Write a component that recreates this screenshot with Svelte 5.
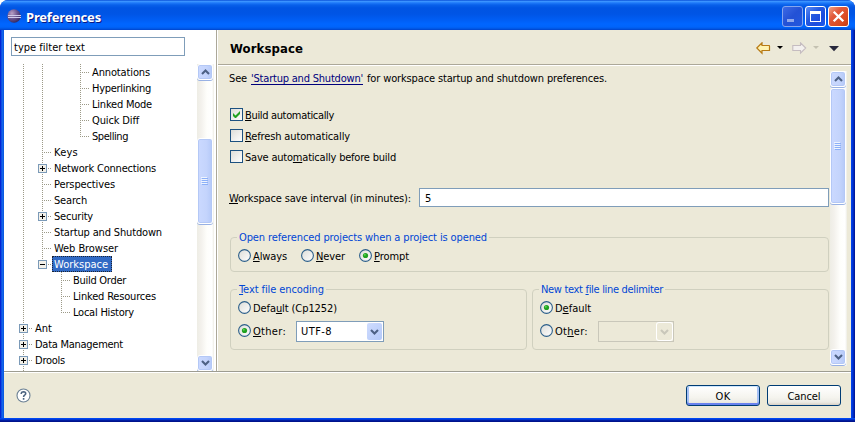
<script>
  // Guides: '|' line through, 't' branch, 'l' last branch, ' ' blank
  const rows = [
    { g: '|| t', text: 'Annotations', w: 58 },
    { g: '|| t', text: 'Hyperlinking', w: 59 },
    { g: '|| t', text: 'Linked Mode', w: 60 },
    { g: '|| t', text: 'Quick Diff', w: 47 },
    { g: '|| l', text: 'Spelling', w: 36 },
    { g: '|t', text: 'Keys', w: 24 },
    { g: '|t', text: 'Network Connections', w: 102, box: '+' },
    { g: '|t', text: 'Perspectives', w: 61 },
    { g: '|t', text: 'Search', w: 33 },
    { g: '|t', text: 'Security', w: 39, box: '+' },
    { g: '|t', text: 'Startup and Shutdown', w: 108 },
    { g: '|t', text: 'Web Browser', w: 64 },
    { g: '|l', text: 'Workspace', w: 54, box: '-', selected: true },
    { g: '| t', text: 'Build Order', w: 53 },
    { g: '| t', text: 'Linked Resources', w: 83 },
    { g: '| l', text: 'Local History', w: 61 },
    { g: 't', text: 'Ant', w: 17, box: '+' },
    { g: 't', text: 'Data Management', w: 88, box: '+' },
    { g: 't', text: 'Drools', w: 30, box: '+' },
    { g: '|', text: '', w: 0 }
  ];

  // Spreads the letters so that a label takes its nominal width
  function fit(node, width) {
    const n = node.textContent.length;
    if (!n || !width) return;
    const natural = node.getBoundingClientRect().width;
    node.style.letterSpacing = (width - natural) / n + 'px';
  }

  // '&' marks the mnemonic letter
  function parts(s) {
    const i = s.indexOf('&');
    return i < 0 ? [s, '', ''] : [s.slice(0, i), s[i + 1], s.slice(i + 2)];
  }
</script>

{#snippet txt(s, w)}
  {@const p = parts(s)}
  <span class="txt" use:fit={w}>{p[0]}{#if p[1]}<u>{p[1]}</u>{/if}{p[2]}</span>
{/snippet}

{#snippet radio(s, w, on)}
  <div class="option">
    <svg width="13" height="13" viewBox="0 0 13 13">
      <circle cx="6.5" cy="6.5" r="5.9" fill="url(#face)" stroke="#2c5f8a" stroke-width="1.1" />
      {#if on}<circle cx="6.5" cy="6.5" r="2.6" fill="#21a121" /><circle cx="5.8" cy="5.8" r="1" fill="#55d551" />{/if}
    </svg>
    {@render txt(s, w)}
  </div>
{/snippet}

{#snippet check(s, w, on)}
  <div class="option">
    <svg width="13" height="13" viewBox="0 0 13 13">
      <rect x=".5" y=".5" width="12" height="12" fill="url(#face)" stroke="#1c5180" />
      {#if on}<path d="M3 5v3l2 2h1l4-4V3L5.5 7.5z" fill="#21a121" />{/if}
    </svg>
    {@render txt(s, w)}
  </div>
{/snippet}

{#snippet chevron(up, color)}
  <svg width="9" height="6" viewBox="0 0 9 6">
    <path d={up ? 'M1 5L4.5 1.5L8 5' : 'M1 1L4.5 4.5L8 1'} fill="none" stroke={color} stroke-width="2.1" />
  </svg>
{/snippet}

{#snippet scrollbar(kind)}
  <div class="scrollbar {kind}">
    <div class="sbtn">{@render chevron(true, '#4d6185')}</div>
    <div class="track">
      <div class="thumb"><i></i><i></i><i></i><i></i></div>
    </div>
    <div class="sbtn">{@render chevron(false, '#4d6185')}</div>
  </div>
{/snippet}

<div class="window">
  <header class="title">
    <svg class="logo" width="16" height="16" viewBox="0 0 16 16">
      <defs>
        <radialGradient id="ball" cx=".35" cy=".3" r=".8">
          <stop offset="0" stop-color="#b9a0c4" /><stop offset=".5" stop-color="#6a558f" /><stop offset="1" stop-color="#2b2057" />
        </radialGradient>
        <linearGradient id="face" x1="0" y1="0" x2="1" y2="1">
          <stop offset="0" stop-color="#dcdcd7" /><stop offset="1" stop-color="#fff" />
        </linearGradient>
      </defs>
      <circle cx="8" cy="8" r="6.7" fill="url(#ball)" />
      <path d="M2 7.5h13M2 9.5h13" stroke="#cfcbea" stroke-width="1" />
    </svg>
    <span class="caption" use:fit={75}>Preferences</span>
    <div class="controls">
      <div class="ctl min"><i></i></div>
      <div class="ctl max"><i></i></div>
      <div class="ctl close">
        <svg width="19" height="19" viewBox="0 0 19 19"><path d="M4.7 4.7l9.6 9.6M14.3 4.7l-9.6 9.6" stroke="#fff" stroke-width="2.3" /></svg>
      </div>
    </div>
  </header>

  <div class="body">
    <aside>
      <div class="filter">{@render txt('type filter text', 71)}</div>
      <div class="treewrap">
        <div class="tree">
          {#each rows as r}
            <div class="row">
              {#each r.g.split('') as c, i}
                <svg width="19" height="16" viewBox="0 0 19 16" shape-rendering="crispEdges">
                  {#if c !== ' '}
                    <path d={c === 'l' ? 'M8.5 0V9' : 'M8.5 0V16'} stroke="#9c9a88" stroke-dasharray="1 1" />
                  {/if}
                  {#if c === 't' || c === 'l'}
                    <path d="M8 8.5H18" stroke="#9c9a88" stroke-dasharray="1 1" />
                  {/if}
                  {#if r.box && i === r.g.length - 1}
                    <rect x="4.5" y="4.5" width="8" height="8" fill="#f2f0e9" stroke="#7b9ab8" />
                    <path d={r.box === '+' ? 'M6 8.5h5M8.5 6v5' : 'M6 8.5h5'} stroke="#000" />
                  {/if}
                </svg>
              {/each}
              {#if r.text}
                <span class="label" class:selected={r.selected}>{@render txt(r.text, r.w)}</span>
              {/if}
            </div>
          {/each}
        </div>
        {@render scrollbar('left')}
      </div>
    </aside>

    <main>
      <div class="head">
        <h1><span use:fit={73}>Workspace</span></h1>
        <svg class="tools" width="84" height="14" viewBox="0 0 84 14">
          <path d="M.8 6L6 .8V3.5H13.2Q13.5 3.5 13.5 4V8.5H6V11.2Z" fill="#fff3b0" stroke="#b87a14" stroke-width="1.2" />
          <path d="M21 4h6L24 7z" fill="#000" />
          <path d="M49.7 6L44.5 .8V3.5H36.8V8.5H44.5V11.2Z" fill="#f3f0ee" stroke="#c5bcc0" stroke-width="1.1" />
          <path d="M57 4h6L60 7z" fill="#c4c1b1" />
          <path d="M73 4h10L78 9.2z" fill="#28283c" />
        </svg>
      </div>
      <div class="scroll">
        <div class="content">
          <p class="intro">
            {@render txt('See', 18)}<a>{@render txt("'Startup and Shutdown'", 112)}</a>{@render txt('for workspace startup and shutdown preferences.', 240)}
          </p>
          <div class="checks">
            {@render check('&Build automatically', 89, true)}
            {@render check('&Refresh automatically', 105, false)}
            {@render check('Save auto&matically before build', 151, false)}
          </div>
          <div class="interval">
            {@render txt('&Workspace save interval (in minutes):', 182)}
            <div class="field">{@render txt('5', 7)}</div>
          </div>
          <fieldset class="open">
            <legend>{@render txt('Open referenced projects when a project is opened', 248)}</legend>
            <div class="line">
              {@render radio('&Always', 34, false)}
              {@render radio('&Never', 29, false)}
              {@render radio('&Prompt', 35, true)}
            </div>
          </fieldset>
          <div class="pair">
            <fieldset class="half">
              <legend>{@render txt('&Text file encoding', 85)}</legend>
              <div class="line">{@render radio('Defa&ult (Cp1252)', 84, false)}</div>
              <div class="line second">
                {@render radio('&Other:', 33, true)}
                <div class="combo">
                  {@render txt('UTF-8', 31)}
                  <div class="drop">{@render chevron(false, '#4d6185')}</div>
                </div>
              </div>
            </fieldset>
            <fieldset class="half">
              <legend>{@render txt('New text &file line delimiter', 122)}</legend>
              <div class="line">{@render radio('D&efault', 36, true)}</div>
              <div class="line second">
                {@render radio('Ot&her:', 33, false)}
                <div class="combo off">
                  <div class="drop">{@render chevron(false, '#c9c7ba')}</div>
                </div>
              </div>
            </fieldset>
          </div>
        </div>
        {@render scrollbar('right')}
      </div>
    </main>
  </div>

  <footer>
    <svg class="help" width="15" height="15" viewBox="0 0 15 15">
      <circle cx="7.5" cy="7.5" r="6.5" fill="#fff" stroke="#6b8095" stroke-width="1.1" />
      <path d="M5.3 6V5.2Q5.5 3.7 7.5 3.7Q9.7 3.8 9.7 5.5Q9.7 6.4 8.6 7.1Q7.6 7.7 7.6 9M7.6 10v1.7" fill="none" stroke="#4c6480" stroke-width="1.6" />
    </svg>
    <div class="push ok">{@render txt('OK', 15)}</div>
    <div class="push">{@render txt('Cancel', 33)}</div>
  </footer>
</div>

<style>
  :global(body) { margin: 0; background: #fff; }
  .window {
    box-sizing: border-box; width: 855px; height: 422px; padding: 0 4px 4px; overflow: hidden;
    display: flex; flex-direction: column; border-radius: 8px 8px 0 0;
    font: 11px/16px "DejaVu Sans Condensed", "DejaVu Sans", sans-serif; font-stretch: condensed; color: #000;
    background: linear-gradient(90deg, #0019cf 0, #0831d9 1px, #166aee 2px, #0855dd 4px, #0855dd 851px, #0048f1 851px, #0030d0 853px, #00138c 855px);
    position: relative;
  }
  .window::after {
    content: ""; position: absolute; left: 0; right: 0; bottom: 0; height: 4px;
    background: linear-gradient(#0048f1 0 1px, #0036d6 1px 2px, #001da0 2px 3px, #00138c 3px);
  }
  .txt { white-space: pre; display: block; width: max-content; height: 16px; line-height: 18px; }
  u { text-decoration: underline; text-decoration-thickness: 1px; text-underline-offset: 1px; text-decoration-skip-ink: none; }
  svg { display: block; flex: none; }

  .title {
    flex: none; height: 30px; margin: 0 -4px; padding: 0 6px 0 6px; box-sizing: border-box; display: flex; align-items: flex-start;
    background: linear-gradient(#0a50d8 0, #3a93ff 1.5px, #1d78f8 3px, #0860ea 5px, #0054e3 8px, #0055e5 14px, #005cf2 19px, #0066ff 24px, #0064fb 27px, #0054e0 29px, #0040c8 30px);
  }
  .logo { margin-top: 8px; }
  .caption {
    margin: 7px 0 0 4px; font: bold 13px/20px "Noto Sans", "Open Sans", sans-serif; color: #fff; white-space: pre;
    text-shadow: 1px 1px 0 #0a1883;
  }
  .controls { margin-left: auto; margin-top: 6px; display: flex; gap: 2px; }
  .ctl { box-sizing: border-box; width: 21px; height: 21px; border: 1px solid #fff; border-radius: 3px; background: linear-gradient(135deg, #5c8cf5, #2459e0 40%, #1c4bdd 70%, #1a5cf0); }
  .ctl.min { border-color: #85a5ee; background: linear-gradient(135deg, #3d6ae5, #2351d5 50%, #2458df); }
  .ctl i { display: block; box-sizing: border-box; }
  .min i { width: 7px; height: 3px; margin: 12px 0 0 4px; background: #8fa8ec; }
  .max i { width: 11px; height: 11px; margin: 4px; border: 1px solid #fff; border-top-width: 3px; }
  .ctl.close { background: linear-gradient(135deg, #f0a184, #e2593a 35%, #da4a20 75%, #c03a12); }

  .body { flex: none; height: 341px; display: flex; border-bottom: 1px solid #9d9c91; }
  aside { box-sizing: border-box; width: 213px; background: #fff; border-right: 1px solid #aca899; padding-top: 7px; overflow: hidden; }
  .filter { box-sizing: border-box; width: 174px; height: 19px; margin-left: 7px; border: 1px solid #7f9db9; padding: 1px 2px; }
  .treewrap { display: flex; height: 307px; margin-top: 8px; padding-left: 11px; }
  .tree { width: 182px; overflow: hidden; }
  .row { display: flex; height: 16px; }
  .label { margin-left: 1px; }
  .label.selected { margin-left: -1px; padding: 0 4px 0 2px; color: #fff; background: #316ac5; outline: 1px dotted #1d2432; outline-offset: -1px; }

  .scrollbar { flex: none; width: 17px; display: flex; flex-direction: column; background: linear-gradient(90deg, #eeede5 0, #f3f1ec 4px, #fefefb 10px, #fff 15px, #eeede5 17px); }
  .sbtn, .thumb { box-sizing: border-box; border: 1px solid #fff; background: linear-gradient(90deg, #cbd9ff, #c4d4fc 60%, #b5c9f8); border-radius: 3px; box-shadow: inset 0 0 0 1px #b4c8f6, 0 1px 0 #98b1e4; }
  .sbtn { flex: none; width: 16px; height: 16px; margin-bottom: 1px; display: flex; align-items: center; justify-content: center; }
  .track { flex: 1; }
  .thumb { width: 16px; display: flex; flex-direction: column; align-items: center; justify-content: center; gap: 1px; }
  .thumb i { width: 6px; height: 1px; background: #8cb0f8; box-shadow: -1px -1px 0 #eef4fe; }
  .left { height: 307px; }
  .left .thumb { margin-top: 57px; height: 86px; }
  .left .sbtn:last-child { margin-bottom: 0; }
  .right { height: 295px; margin-top: 5px; }
  .right .thumb { height: 116px; }

  main { box-sizing: border-box; flex: 1; background: #ece9d8; border-left: 1px solid #fff; display: flex; flex-direction: column; }
  .head { height: 34px; display: flex; justify-content: space-between; padding: 0 11px 0 12px; border-bottom: 1px solid #aca899; box-shadow: 0 1px 0 #fff; }
  h1 { margin: 9px 0 0; font: bold 13px/20px "DejaVu Sans Condensed", "DejaVu Sans", sans-serif; font-stretch: condensed; white-space: pre; }
  .tools { margin-top: 12px; }
  .scroll { flex: 1; display: flex; overflow: hidden; padding: 1px 4px 0 0; }
  .content { width: 612px; box-sizing: border-box; padding: 4px 1px 0 12px; }
  .intro { margin: 0 0 0 -1px; display: flex; gap: 4px; }
  .intro a { color: #00007c; text-decoration: underline; text-underline-offset: 2px; text-decoration-skip-ink: none; }
  .checks { margin-top: 21px; display: flex; flex-direction: column; gap: 5px; }
  .option { display: flex; gap: 2px; }
  .option svg { margin-top: 1px; }
  .interval { margin: 23px 0 0 -1px; display: flex; justify-content: space-between; align-items: flex-start; }
  .interval > .txt { margin-top: 2px; }
  .field { box-sizing: border-box; width: 410px; height: 19px; border: 1px solid #7f9db9; background: #fff; padding: 1px 5px; }
  fieldset { box-sizing: border-box; min-width: 0; margin: 0; padding: 0 7px; border: 1px solid #d0d0bf; border-radius: 4px; }
  legend { margin-left: -1px; padding: 0 2px; color: #0046d5; }
  .open { height: 43px; margin-top: 22px; }
  .line { display: flex; margin-top: 3px; }
  .open .line { gap: 14px; }
  .pair { display: flex; gap: 5px; margin-top: 9px; }
  .half { width: 297px; height: 69px; }
  .half .line.second { margin-top: 5px; gap: 10px; }
  .second .option { margin-top: 2px; }
  .combo { box-sizing: border-box; width: 88px; height: 21px; border: 1px solid #7f9db9; background: #fff; padding: 1px 1px 1px 4px; display: flex; justify-content: space-between; }
  .drop { box-sizing: border-box; width: 15px; height: 17px; margin-left: auto; border-radius: 2px; background: linear-gradient(135deg, #cfdcfe, #b4c9f9); display: flex; align-items: center; justify-content: center; }
  .combo.off { width: 76px; border-color: #c9c7ba; background: #ece9d8; }
  .off .drop { background: #ece9d8; box-shadow: 0 0 0 1px #fff; }

  footer { box-sizing: border-box; height: 47px; display: flex; align-items: flex-start; border-top: 1px solid #fff; background: #ece9d8; padding: 12px 10px 0 12px; gap: 7px; }
  .help { margin: 3px auto 0 0; }
  .push { box-sizing: border-box; width: 74px; height: 21px; border: 1px solid #003c74; border-radius: 3px; background: linear-gradient(#fff, #f5f4ee 60%, #ecebe5 85%, #d8d0c4); display: flex; justify-content: center; padding-top: 2px; }
  .ok { box-shadow: inset 0 1px 0 #cee7ff, inset 0 -2px 0 #6982ee, inset 2px 0 0 #a6c1f5, inset -2px 0 0 #a6c1f5; }
</style>
